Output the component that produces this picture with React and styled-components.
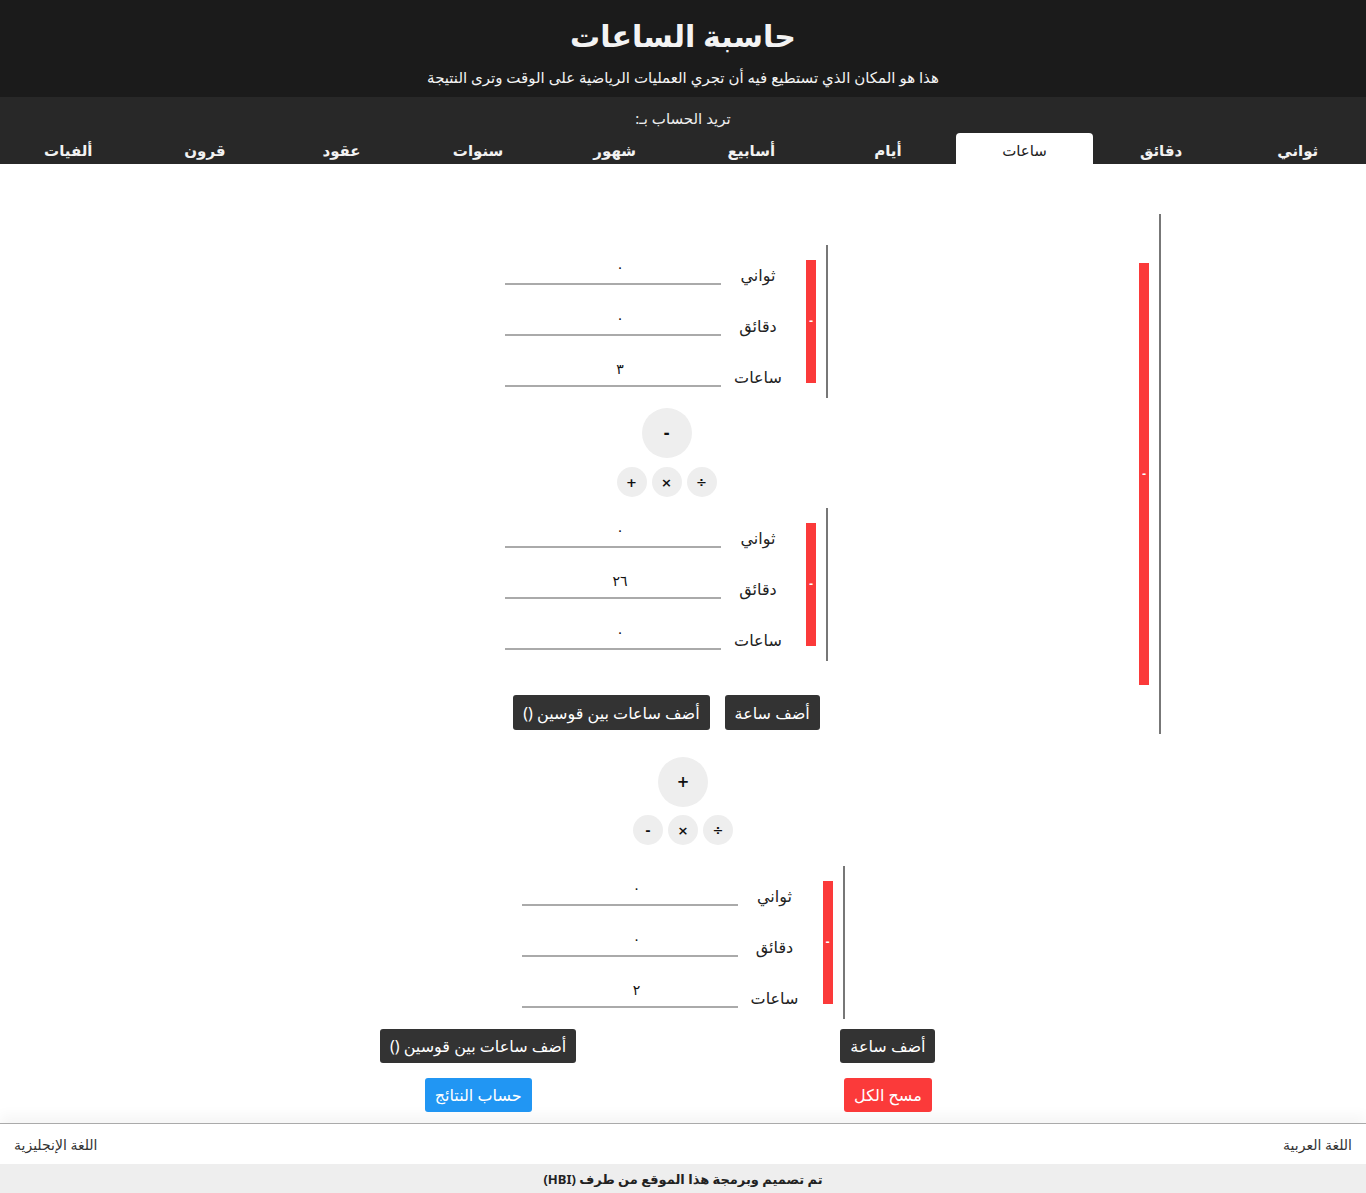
import React from "react";
import styled, { createGlobalStyle } from "styled-components";

const Global = createGlobalStyle`
  html, body { margin: 0; padding: 0; background: #fff; }
  body {
    direction: rtl;
    font-family: "Noto Sans", "DejaVu Sans", sans-serif;
    color: #222;
  }
  * { box-sizing: border-box; }
`;

const Header = styled.header`
  background: #1b1b1b;
  height: 97px;
  display: flex;
  flex-direction: column;
  align-items: center;
  color: #f3f3f3;
`;

const Title = styled.h1`
  margin: 12px 0 0;
  font-size: 30px;
  line-height: 48px;
  font-weight: 700;
`;

const Subtitle = styled.p`
  margin: 7px 0 0;
  font-size: 15px;
  line-height: 20px;
`;

const Nav = styled.nav`
  background: #282828;
  height: 67px;
  display: flex;
  flex-direction: column;
  color: #eee;
`;

const NavLabel = styled.div`
  text-align: center;
  font-size: 15px;
  line-height: 20px;
  margin-top: 11px;
`;

const Tabs = styled.div`
  display: grid;
  grid-template-columns: repeat(10, 1fr);
  height: 31px;
  margin-top: auto;
`;

const Tab = styled.div`
  display: flex;
  align-items: center;
  justify-content: center;
  padding-top: 2px;
  font-size: 15px;
  font-weight: ${(p) => (p.$active ? 400 : 700)};
  color: ${(p) => (p.$active ? "#222" : "#f2f2f2")};
  background: ${(p) => (p.$active ? "#fff" : "transparent")};
  border-radius: 4px 4px 0 0;
`;

const Main = styled.main`
  display: flex;
  flex-direction: column;
  align-items: center;
  padding-top: 50px;
`;

const OuterGroup = styled.div`
  width: 70%;
  display: flex;
  align-items: stretch;
  border-right: 2px solid #777;
  padding-right: 10px;
`;

const Group = styled.div`
  display: flex;
  align-items: stretch;
  border-right: 2px solid #777;
  padding-right: 10px;
  margin-top: ${(p) => p.$mt || 0}px;
`;

const BarTrack = styled.div`
  width: 10px;
  flex: none;
  display: flex;
  align-items: center;
  margin-left: 11px;
`;

const Bar = styled.button`
  width: 10px;
  height: 81%;
  border: none;
  padding: 0;
  margin: 0;
  background: #fb3a3a;
  color: #fff;
  font-size: 10px;
  font-weight: 700;
  line-height: 1;
  display: flex;
  align-items: center;
  justify-content: center;
  font-family: "DejaVu Sans", sans-serif;
`;

const OuterBody = styled.div`
  flex: 1;
  display: flex;
  flex-direction: column;
  align-items: center;
  padding: 31px 0 4px;
`;

const Rows = styled.div`
  display: flex;
  flex-direction: column;
`;

const Row = styled.div`
  display: flex;
  align-items: flex-end;
  height: 51px;
  padding-bottom: 11px;
`;

const Label = styled.label`
  width: 74px;
  text-align: center;
  font-size: 16px;
  line-height: 20px;
  color: #222;
`;

const Field = styled.input`
  width: 216px;
  height: 31px;
  border: none;
  border-bottom: 2px solid #aaa;
  outline: none;
  text-align: center;
  font-size: 14px;
  font-family: "DejaVu Sans", sans-serif;
  color: #111;
  padding: 0 0 4px 14px;
  background: transparent;
`;

const OpBlock = styled.div`
  display: flex;
  flex-direction: column;
  align-items: center;
  margin-top: ${(p) => p.$mt}px;
`;

const OpBig = styled.button`
  width: 50px;
  height: 50px;
  border-radius: 50%;
  border: none;
  background: #eee;
  font-size: 15px;
  font-weight: 700;
  color: #111;
  font-family: "DejaVu Sans", sans-serif;
  padding: 0;
`;

const OpSmallRow = styled.div`
  display: flex;
  gap: 5px;
  margin-top: ${(p) => p.$mt}px;
`;

const OpSmall = styled.button`
  width: 30px;
  height: 30px;
  border-radius: 50%;
  border: none;
  background: #eee;
  font-size: 13px;
  font-weight: 700;
  color: #111;
  font-family: "DejaVu Sans", sans-serif;
  padding: 0;
`;

const ButtonRow = styled.div`
  display: flex;
  gap: 15px;
  margin-top: 34px;
`;

const Btn = styled.button`
  height: ${(p) => p.$h || 35}px;
  padding: 0 10px;
  border: none;
  border-radius: 3px;
  background: ${(p) => p.$bg || "#333"};
  color: #fff;
  font-size: 16px;
  font-family: "Noto Sans", "DejaVu Sans", sans-serif;
  white-space: nowrap;
`;

const ActionGrid = styled.div`
  width: 60%;
  display: grid;
  grid-template-columns: 1fr 1fr;
  row-gap: 15px;
  margin-top: 10px;
  justify-items: center;
`;

const Footer = styled.footer`
  margin-top: 11px;
  border-top: 1px solid #aaa;
  box-shadow: 0 -8px 12px rgba(0, 0, 0, 0.04);
`;

const LangRow = styled.div`
  height: 40px;
  display: flex;
  align-items: center;
  justify-content: space-between;
  padding: 0 14px;
  font-size: 14px;
  color: #333;
`;

const Credit = styled.div`
  background: #eee;
  height: 29px;
  display: flex;
  align-items: center;
  justify-content: center;
  font-size: 13px;
  font-weight: 700;
  color: #222;
`;

const tabs = ["ثواني", "دقائق", "ساعات", "أيام", "أسابيع", "شهور", "سنوات", "عقود", "قرون", "ألفيات"];

function MinusBar() {
  return (
    <BarTrack>
      <Bar>-</Bar>
    </BarTrack>
  );
}

function TimeGroup({ values, mt }) {
  const labels = ["ثواني", "دقائق", "ساعات"];
  return (
    <Group $mt={mt}>
      <MinusBar />
      <Rows>
        {labels.map((l, i) => (
          <Row key={l}>
            <Label>{l}</Label>
            <Field defaultValue={values[i]} />
          </Row>
        ))}
      </Rows>
    </Group>
  );
}

function Ops({ big, smalls, mt, smt }) {
  return (
    <OpBlock $mt={mt}>
      <OpBig>{big}</OpBig>
      <OpSmallRow $mt={smt}>
        {smalls.map((s) => (
          <OpSmall key={s}>{s}</OpSmall>
        ))}
      </OpSmallRow>
    </OpBlock>
  );
}

export default function App() {
  return (
    <>
      <Global />
      <Header>
        <Title>حاسبة الساعات</Title>
        <Subtitle>هذا هو المكان الذي تستطيع فيه أن تجري العمليات الرياضية على الوقت وترى النتيجة</Subtitle>
      </Header>
      <Nav>
        <NavLabel>تريد الحساب بـ:</NavLabel>
        <Tabs>
          {tabs.map((t) => (
            <Tab key={t} $active={t === "ساعات"}>{t}</Tab>
          ))}
        </Tabs>
      </Nav>
      <Main>
        <OuterGroup>
          <MinusBar />
          <OuterBody>
            <TimeGroup values={["٠", "٠", "٣"]} />
            <Ops big="-" smalls={["÷", "×", "+"]} mt={10} smt={9} />
            <TimeGroup values={["٠", "٢٦", "٠"]} mt={11} />
            <ButtonRow>
              <Btn>أضف ساعة</Btn>
              <Btn>أضف ساعات بين قوسين ()</Btn>
            </ButtonRow>
          </OuterBody>
        </OuterGroup>
        <Ops big="+" smalls={["÷", "×", "-"]} mt={23} smt={8} />
        <TimeGroup values={["٠", "٠", "٢"]} mt={21} />
        <ActionGrid>
          <Btn $h={34}>أضف ساعة</Btn>
          <Btn $h={34}>أضف ساعات بين قوسين ()</Btn>
          <Btn $h={34} $bg="#fb3a3a">مسح الكل</Btn>
          <Btn $h={34} $bg="#2196f3">حساب النتائج</Btn>
        </ActionGrid>
      </Main>
      <Footer>
        <LangRow>
          <span>اللغة العربية</span>
          <span>اللغة الإنجليزية</span>
        </LangRow>
        <Credit>تم تصميم وبرمجة هذا الموقع من طرف (HBI)</Credit>
      </Footer>
    </>
  );
}
